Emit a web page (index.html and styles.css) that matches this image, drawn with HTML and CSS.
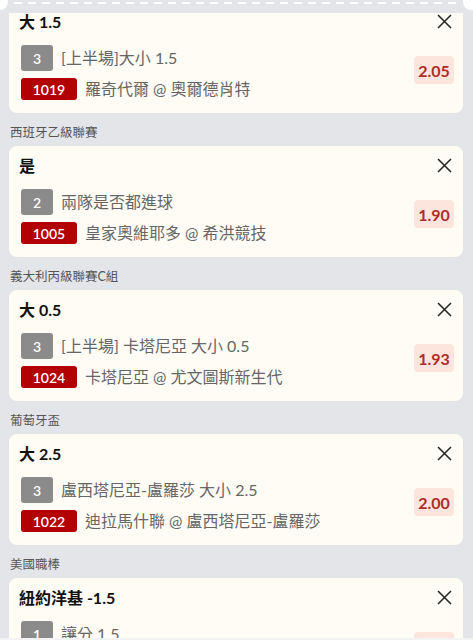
FILE: index.html
```html
<!DOCTYPE html>
<html lang="zh-Hant">
<head>
<meta charset="utf-8">
<title>投注單</title>
<link rel="stylesheet" href="styles.css">
</head>
<body>
<div class="topcap"><span class="cap cap-l"></span><span class="dash"></span><span class="cap cap-r"></span></div>
<main class="list">
  <section class="card first">
    <div class="head"><span class="title">大 1.5</span><svg class="close" viewBox="0 0 15 15" width="15" height="15"><path d="M1 1L14 14M14 1L1 14"/></svg></div>
    <div class="body">
      <div class="rows">
        <div class="row r1"><span class="nb grey">3</span><span class="txt">[上半場]大小 1.5</span></div>
        <div class="row r2"><span class="nb red">1019</span><span class="txt">羅奇代爾 @ 奧爾德肖特</span></div>
      </div>
      <span class="odds">2.05</span>
    </div>
  </section>

  <div class="league">西班牙乙級聯賽</div>
  <section class="card">
    <div class="head"><span class="title">是</span><svg class="close" viewBox="0 0 15 15" width="15" height="15"><path d="M1 1L14 14M14 1L1 14"/></svg></div>
    <div class="body">
      <div class="rows">
        <div class="row r1"><span class="nb grey">2</span><span class="txt">兩隊是否都進球</span></div>
        <div class="row r2"><span class="nb red">1005</span><span class="txt">皇家奧維耶多 @ 希洪競技</span></div>
      </div>
      <span class="odds">1.90</span>
    </div>
  </section>

  <div class="league">義大利丙級聯賽C組</div>
  <section class="card">
    <div class="head"><span class="title">大 0.5</span><svg class="close" viewBox="0 0 15 15" width="15" height="15"><path d="M1 1L14 14M14 1L1 14"/></svg></div>
    <div class="body">
      <div class="rows">
        <div class="row r1"><span class="nb grey">3</span><span class="txt">[上半場] 卡塔尼亞 大小 0.5</span></div>
        <div class="row r2"><span class="nb red">1024</span><span class="txt">卡塔尼亞 @ 尤文圖斯新生代</span></div>
      </div>
      <span class="odds">1.93</span>
    </div>
  </section>

  <div class="league">葡萄牙盃</div>
  <section class="card">
    <div class="head"><span class="title">大 2.5</span><svg class="close" viewBox="0 0 15 15" width="15" height="15"><path d="M1 1L14 14M14 1L1 14"/></svg></div>
    <div class="body">
      <div class="rows">
        <div class="row r1"><span class="nb grey">3</span><span class="txt">盧西塔尼亞-盧羅莎 大小 2.5</span></div>
        <div class="row r2"><span class="nb red">1022</span><span class="txt">迪拉馬什聯 @ 盧西塔尼亞-盧羅莎</span></div>
      </div>
      <span class="odds">2.00</span>
    </div>
  </section>

  <div class="league">美國職棒</div>
  <section class="card">
    <div class="head"><span class="title">紐約洋基 -1.5</span><svg class="close" viewBox="0 0 15 15" width="15" height="15"><path d="M1 1L14 14M14 1L1 14"/></svg></div>
    <div class="body">
      <div class="rows">
        <div class="row r1"><span class="nb grey">1</span><span class="txt">讓分 1.5</span></div>
        <div class="row r2"><span class="nb red">&nbsp;</span><span class="txt">&nbsp;</span></div>
      </div>
      <span class="odds">&nbsp;</span>
    </div>
  </section>
</main>
<div class="bottombar"></div>
</body>
</html>
```
FILE: styles.css
```css
html, body {
  margin: 0;
  padding: 0;
}
body {
  background: #e4e5e9;
  font-family: "Lato", "Noto Sans CJK TC", "Noto Sans", sans-serif;
  color: #222;
  width: 473px;
  overflow: hidden;
}
.topcap {
  position: fixed;
  top: 0;
  left: 0;
  right: 0;
  height: 13px;
  background: #e4e5e9;
  display: flex;
  align-items: flex-start;
  z-index: 5;
}
.cap {
  width: 8px;
  height: 10px;
  background: #ffffff;
  flex: none;
}
.cap-l { border-bottom-right-radius: 8px; }
.cap-r { border-bottom-left-radius: 8px; width: 10px; }
.dash {
  flex: 1;
  height: 2px;
  margin: 2px 4px 0 6px;
  background: repeating-linear-gradient(90deg, #ffffff 0 8px, transparent 8px 14px);
}
.bottombar {
  position: fixed;
  left: 0;
  right: 0;
  bottom: 0;
  height: 2px;
  background: #f3f3f4;
  z-index: 5;
}
.list {
  padding: 2px 10px 40px 9px;
}
.league {
  font-size: 12.5px;
  line-height: 18px;
  color: #555;
  padding: 11px 1px 4px;
}
.card {
  background: #fffcf5;
  border-radius: 8px;
  padding: 8px 9px 13px 10px;
}
.head {
  display: flex;
  justify-content: space-between;
  align-items: flex-start;
  height: 24px;
}
.title {
  font-size: 16px;
  line-height: 24px;
  font-weight: 700;
  color: #111;
}
.close {
  margin: 4px 2px 0 0;
  fill: none;
  stroke: #222;
  stroke-width: 1.5;
}
.body {
  display: flex;
  justify-content: space-between;
  margin-top: 11px;
}
.rows {
  display: flex;
  flex-direction: column;
  gap: 7px;
  padding-left: 2px;
}
.row {
  display: flex;
  align-items: center;
  gap: 8px;
}
.nb {
  display: inline-flex;
  align-items: center;
  justify-content: center;
  color: #fff;
  border-radius: 3px;
  font-size: 14px;
  font-weight: 600;
}
.grey {
  width: 32px;
  height: 26px;
  background: #8b8b8b;
}
.red {
  width: 56px;
  height: 22px;
  background: #b30000;
}
.txt {
  font-size: 16px;
  color: #666;
  white-space: nowrap;
}
.r1 .txt { line-height: 26px; }
.r2 .txt { line-height: 22px; }
.odds {
  align-self: center;
  margin-bottom: 5px;
  min-width: 40px;
  height: 28px;
  box-sizing: border-box;
  padding: 0 4px;
  display: inline-flex;
  align-items: center;
  justify-content: center;
  background: #fbe5dd;
  color: #b22a2a;
  font-size: 16px;
  font-weight: 700;
  border-radius: 4px;
}
```
